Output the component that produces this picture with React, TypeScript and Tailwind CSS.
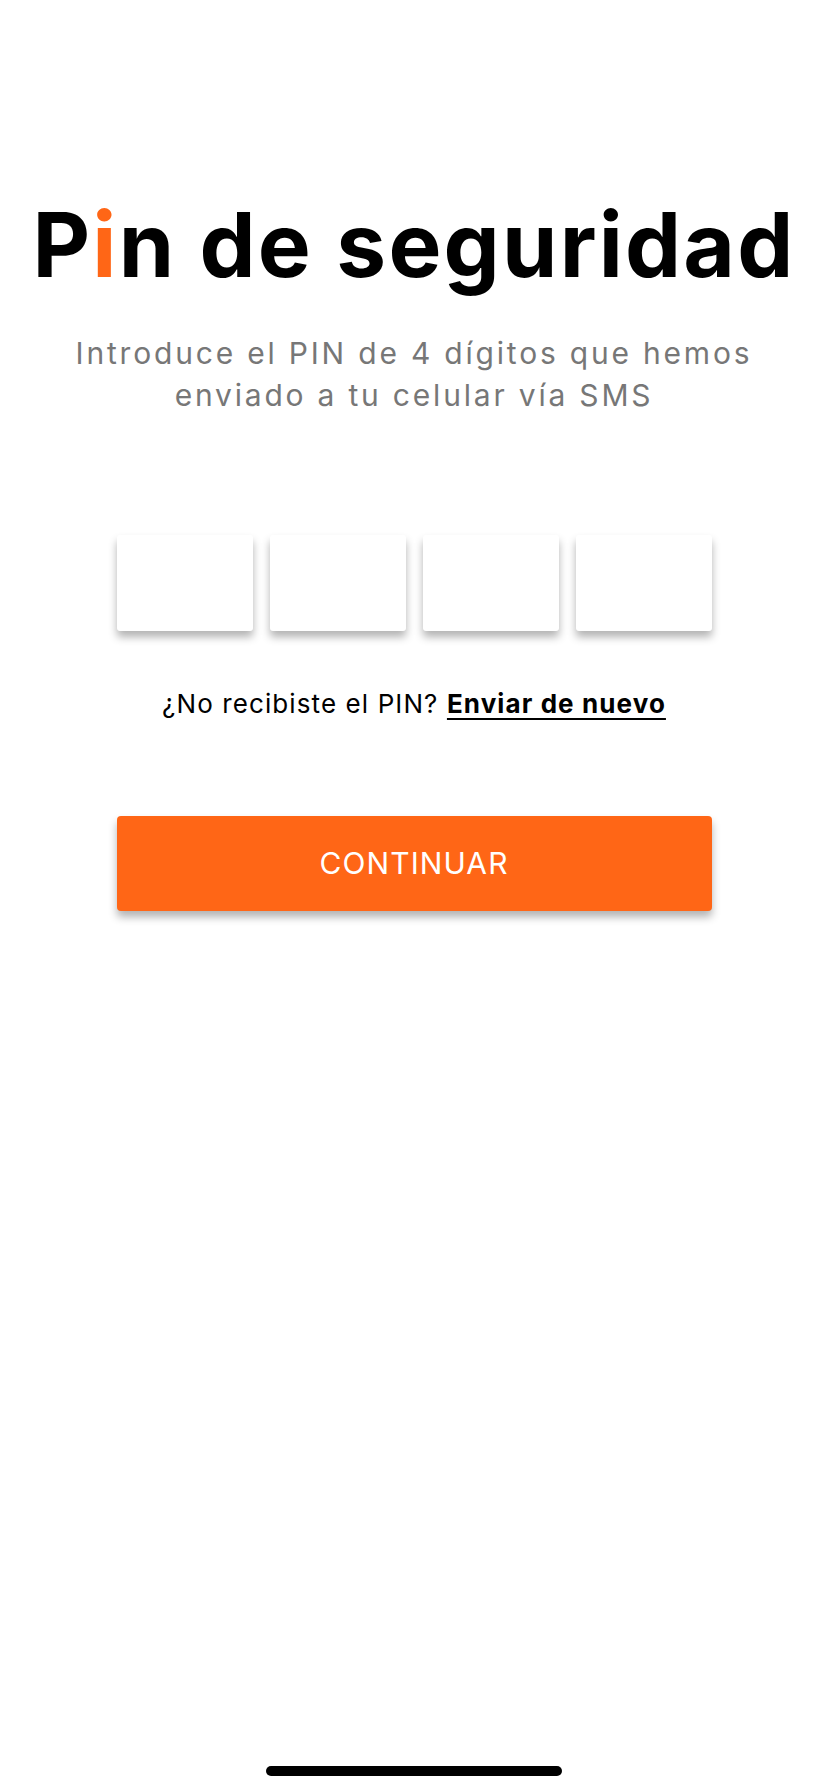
import React from "react";

export default function App() {
  return (
    <div
      className="w-[828px] h-[1792px] bg-white flex flex-col items-center relative"
      style={{ fontFamily: "Inter, 'Noto Sans', sans-serif" }}
    >
      <h1 className="mt-[190px] text-[89px] leading-[110px] font-bold text-black tracking-[2.2px]">
        P<span className="text-[#FF6616]">i</span>n de seguridad
      </h1>
      <p className="mt-[32px] text-[30px] leading-[42px] text-[#777777] text-center tracking-[2.8px]">
        Introduce el PIN de 4 dígitos que hemos
        <br />
        enviado a tu celular vía SMS
      </p>
      <div className="mt-[119px] flex gap-[17px]">
        {[0, 1, 2, 3].map((i) => (
          <div
            key={i}
            className="w-[136px] h-[96px] bg-white rounded-[3px] shadow-[0_6px_8px_rgba(0,0,0,0.3)]"
          />
        ))}
      </div>
      <p className="mt-[55px] text-[26px] leading-[36px] text-black tracking-[1.1px]">
        ¿No recibiste el PIN?{" "}
        <span className="font-bold underline underline-offset-[5px] decoration-[2px]">
          Enviar de nuevo
        </span>
      </p>
      <button className="mt-[94px] w-[595px] h-[95px] bg-[#FF6616] rounded-[4px] text-white text-[30px] tracking-[1.1px] shadow-[0_6px_8px_rgba(0,0,0,0.3)]">
        CONTINUAR
      </button>
      <div className="absolute bottom-[16px] left-[266px] w-[296px] h-[10px] rounded-full bg-black" />
    </div>
  );
}
